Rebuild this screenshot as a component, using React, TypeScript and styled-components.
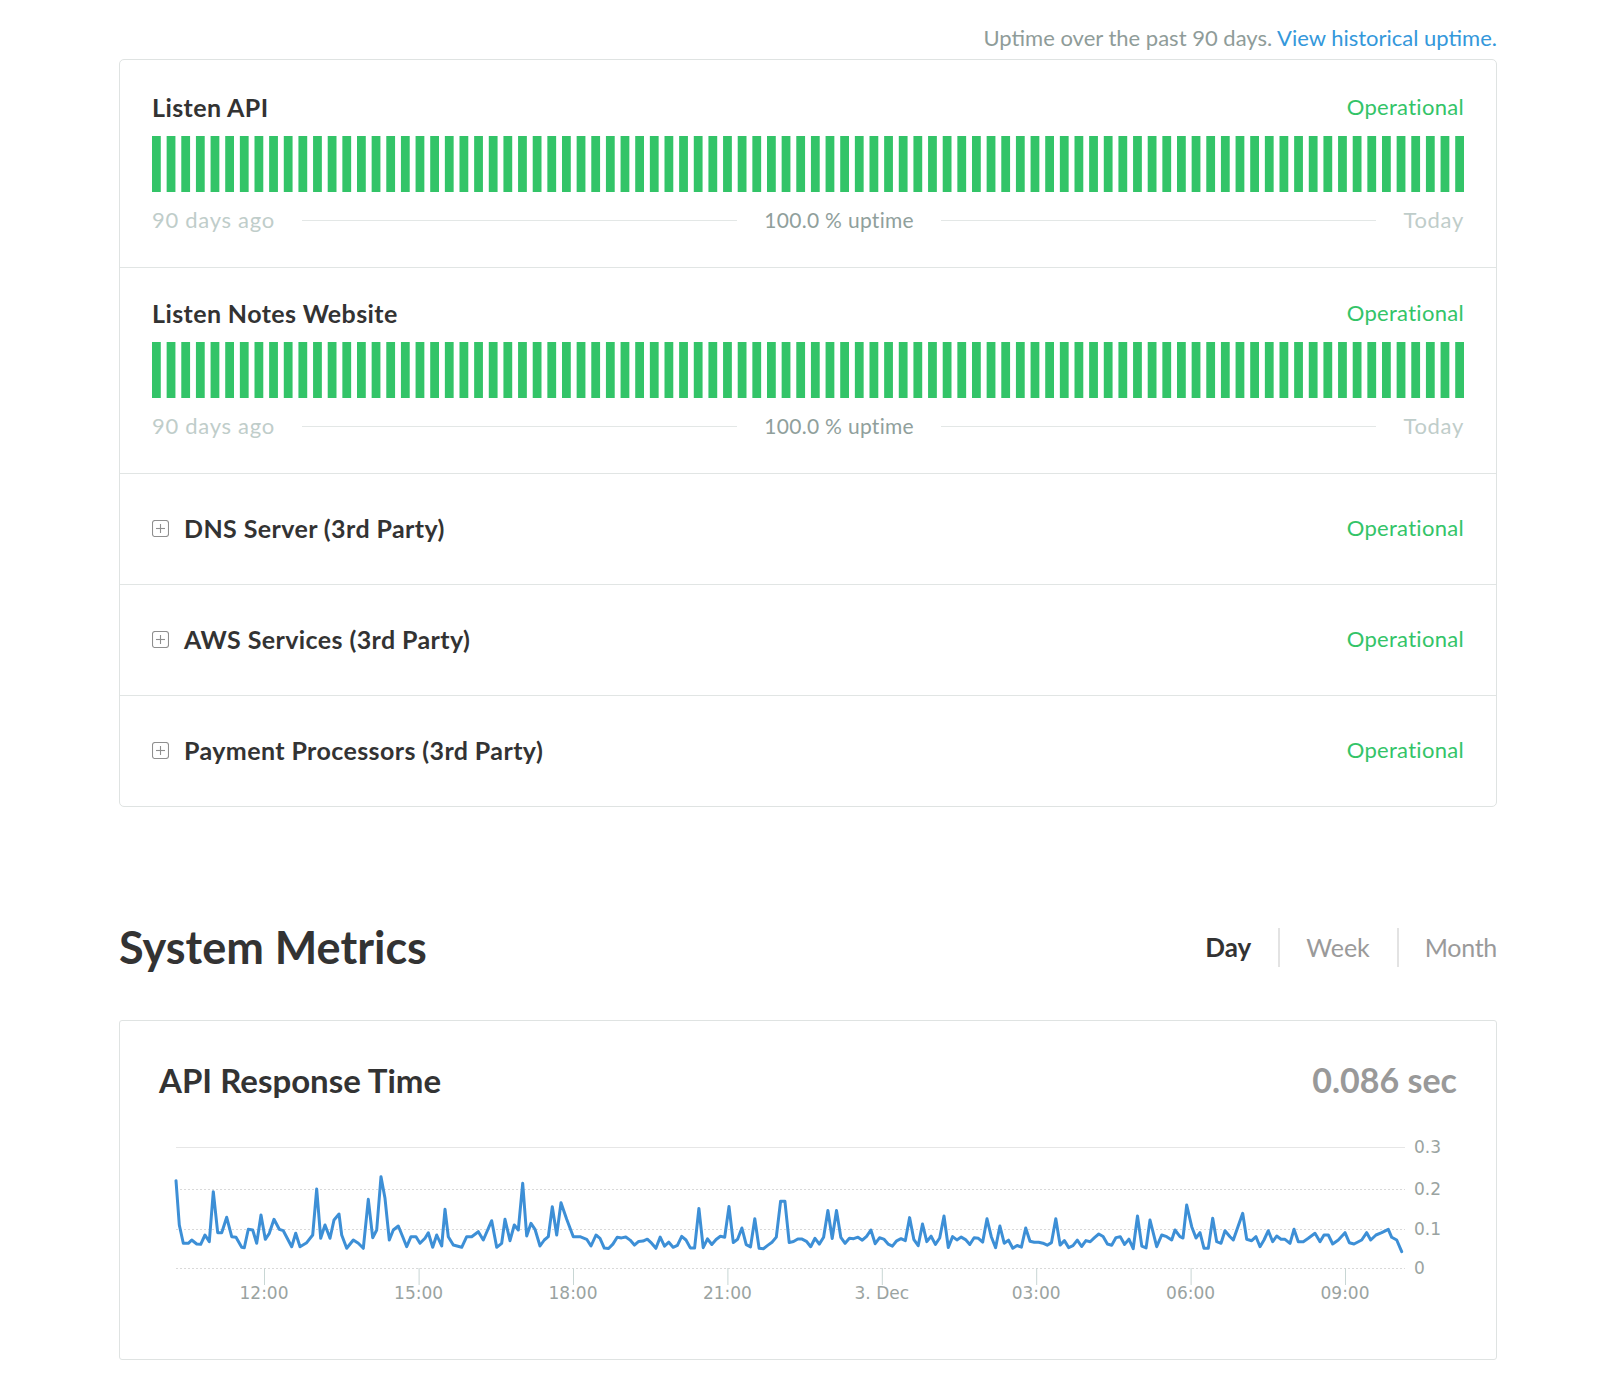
import React from "react";
import styled, { createGlobalStyle } from "styled-components";

const GlobalStyle = createGlobalStyle`
  html, body { margin: 0; padding: 0; background: #fff; }
  body {
    font-family: Lato, "Liberation Sans", sans-serif;
    color: #333;
    -webkit-font-smoothing: antialiased;
  }
`;

const GREEN = "#33c468";

const Page = styled.div`
  width: 1378px;
  margin-left: 119px;
  padding-top: 24px;
  padding-bottom: 18px;
`;

const UptimeNote = styled.div`
  text-align: right;
  font-size: 22px;
  line-height: 28px;
  color: #8f9c99;
  margin-bottom: 7px;
`;

const NoteLink = styled.a`
  color: #3498db;
  text-decoration: none;
`;

const ComponentsCard = styled.div`
  border: 1px solid #dfe3e2;
  border-radius: 5px;
`;

const UptimeRow = styled.div`
  padding: 27px 32px 35px;
  &:first-child {
    padding-top: 29px;
  }
  &:not(:first-child) {
    border-top: 1px solid #e1e5e4;
  }
`;

const GroupRow = styled.div`
  display: flex;
  align-items: center;
  justify-content: space-between;
  height: 36px;
  padding: 36px 32px 38px;
  border-top: 1px solid #e1e5e4;
`;

const RowHeader = styled.div`
  display: flex;
  align-items: center;
  justify-content: space-between;
  height: 36px;
`;

const ComponentName = styled.span`
  font-size: 25px;
  line-height: 36px;
  letter-spacing: 0.4px;
  font-weight: 700;
  color: #333;
`;

const GroupName = styled.span`
  display: flex;
  align-items: center;
  gap: 15px;
  font-size: 25px;
  line-height: 36px;
  letter-spacing: 0.4px;
  font-weight: 700;
  color: #333;
`;

const Status = styled.span`
  font-size: 22px;
  line-height: 36px;
  letter-spacing: 0.3px;
  color: ${GREEN};
`;

const BarSvg = styled.svg`
  display: block;
  width: 100%;
  height: 56px;
  margin-top: 11px;
`;

const Legend = styled.div`
  display: flex;
  align-items: center;
  height: 24px;
  margin-top: 16px;
  line-height: 24px;
`;

const LegendEdge = styled.span`
  font-size: 22px;
  letter-spacing: 0.7px;
  color: #bfcdca;
`;

const LegendCenter = styled.span`
  font-size: 21px;
  letter-spacing: 0.3px;
  color: #90a09c;
`;

const LegendLine = styled.span`
  flex: 1;
  height: 0;
  border-top: 1px solid #e3e7e6;
  margin: 0 27px;
`;

const MetricsHeader = styled.div`
  display: flex;
  align-items: center;
  justify-content: space-between;
  margin-top: 113px;
`;

const MetricsTitle = styled.h2`
  margin: 0;
  font-size: 45px;
  line-height: 54px;
  font-weight: 700;
  color: #333;
`;

const Tabs = styled.div`
  display: flex;
  align-items: center;
`;

const Tab = styled.span<{ $active?: boolean }>`
  font-size: ${(p) => (p.$active ? "26px" : "25px")};
  line-height: 39px;
  padding: 0 27px;
  color: ${(p) => (p.$active ? "#333" : "#9a9a9a")};
  font-weight: ${(p) => (p.$active ? 700 : 400)};
  &:not(:first-child) {
    border-left: 2px solid #e3e3e3;
    padding-left: 26px;
  }
  &:last-child {
    padding-right: 0;
    letter-spacing: -0.3px;
  }
`;

const MetricCard = styled.div`
  margin-top: 46px;
  border: 1px solid #dfe3e2;
  border-radius: 3px;
  padding: 39px 39px 39px;
`;

const MetricHead = styled.div`
  display: flex;
  align-items: baseline;
  justify-content: space-between;
  height: 40px;
`;

const MetricName = styled.span`
  font-size: 33px;
  line-height: 40px;
  font-weight: 700;
  color: #333;
`;

const MetricValue = styled.span`
  font-size: 34px;
  line-height: 40px;
  font-weight: 700;
  color: #999;
`;

const ChartSvg = styled.svg`
  display: block;
  margin-top: 30px;
`;

const PlusIcon = () => (
  <svg width="17" height="17" viewBox="0 0 17 17">
    <rect x="0.5" y="0.5" width="16" height="16" rx="2.5" fill="none" stroke="#8f8f8f" strokeWidth="1.1" />
    <line x1="4" y1="8.5" x2="13" y2="8.5" stroke="#8f8f8f" strokeWidth="1.1" />
    <line x1="8.5" y1="4" x2="8.5" y2="13" stroke="#8f8f8f" strokeWidth="1.1" />
  </svg>
);

const UptimeBars = () => (
  <BarSvg viewBox="0 0 448 34" preserveAspectRatio="none">
    {Array.from({ length: 90 }, (_, i) => (
      <rect key={i} x={i * 5} y={0} width={3} height={34} fill={GREEN} />
    ))}
  </BarSvg>
);

const UptimeComponent = ({ name }: { name: string }) => (
  <UptimeRow>
    <RowHeader>
      <ComponentName>{name}</ComponentName>
      <Status>Operational</Status>
    </RowHeader>
    <UptimeBars />
    <Legend>
      <LegendEdge>90 days ago</LegendEdge>
      <LegendLine />
      <LegendCenter>100.0 % uptime</LegendCenter>
      <LegendLine />
      <LegendEdge>Today</LegendEdge>
    </Legend>
  </UptimeRow>
);

const GroupComponent = ({ name }: { name: string }) => (
  <GroupRow>
    <GroupName>
      <PlusIcon />
      {name}
    </GroupName>
    <Status>Operational</Status>
  </GroupRow>
);

/* ---- chart data (page coordinates) ---- */
const Y0 = 1268;
const PX_PER_UNIT = 400;

const tracedStart: [number, number][] = [
  [176, 1180.7], [179.3, 1225], [183.3, 1243.3], [188.3, 1243.3], [191.7, 1240], [196.7, 1244], [200.7, 1244.3],
  [205, 1235], [209.3, 1241.7], [213.3, 1191.7], [217.7, 1232.7], [221.7, 1232.7], [226.7, 1217.3], [231.7, 1236.7],
  [236, 1237.3], [241.7, 1247.3], [244.3, 1247.7], [248.3, 1229.3], [252.7, 1230], [256.7, 1243.3], [261, 1215],
  [265.3, 1239.3], [269.3, 1233.3], [274, 1219.3], [279.3, 1229.3], [283.3, 1230.7], [291.7, 1246.7], [295.7, 1233.3],
  [300, 1246.7], [306.7, 1242.7], [312.7, 1235], [316.7, 1189], [320.7, 1238.3], [325, 1225], [330, 1238.3],
  [334, 1220], [339, 1214], [341.7, 1235], [346.7, 1248.3], [353.3, 1240], [358.3, 1243.3], [363.3, 1248.3],
  [368.3, 1199.3], [372.7, 1237.7], [376.7, 1230], [381, 1176.7], [385, 1198.3], [389.3, 1240], [393.3, 1230],
  [398.3, 1226], [402.7, 1236.7], [406.7, 1246.7], [411, 1236.7], [416, 1236.7], [420, 1243.3], [425, 1238.3],
  [428.3, 1232.7], [432.7, 1247.3], [436.7, 1235], [441.7, 1246], [445, 1209.3], [448.3, 1236.7], [453.3, 1245],
  [461.7, 1247.3], [466.7, 1236.7], [471.7, 1236.7], [478.3, 1231.7], [483.3, 1240], [491.7, 1220.7],
  [496.7, 1247.3], [501.7, 1243.3], [505, 1219.3], [510, 1240.7], [514.3, 1225], [518.3, 1230], [522.7, 1183.3],
  [526.7, 1236], [531, 1223.3], [535, 1229.3], [540, 1246], [544.3, 1240], [548.3, 1236.7], [552.3, 1206.7],
  [556.7, 1235], [561, 1202.7], [566.7, 1219.3], [573.3, 1236.7], [580, 1236.7], [586.7, 1239.3], [591, 1246],
  [596, 1235], [600, 1238.3],
];

const spikes: [number, number][] = [
  [697, 0.149], [730.6, 0.154], [743, 0.1], [756, 0.123], [782.7, 0.167], [826.5, 0.144], [834.7, 0.144],
  [870, 0.095], [908, 0.126], [923, 0.11], [943, 0.13], [985.7, 0.123], [1000, 0.105], [1025, 0.1],
  [1057, 0.123], [1100, 0.085], [1137.8, 0.13],
];

const generateMiddle = (): [number, number][] => {
  let seed = 20231202;
  const rnd = () => {
    seed = (seed * 1103515245 + 12345) % 2147483648;
    return seed / 2147483648;
  };
  const pts: [number, number][] = [];
  for (let x = 604.3; x < 1148; x += 4.3) {
    let v = 0.064 + (rnd() - 0.5) * 0.032;
    for (const [sx, sv] of spikes) {
      if (Math.abs(sx - x) < 2.2) v = sv;
    }
    pts.push([x, Y0 - v * PX_PER_UNIT]);
  }
  return pts;
};

const tracedEnd: [number, number][] = [
  [1150, 1220], [1156.7, 1246.7], [1161.7, 1235], [1166.7, 1236.7], [1171.7, 1240], [1175, 1230], [1180, 1236.7],
  [1183, 1238], [1186.7, 1205], [1191.7, 1226.7], [1196, 1238], [1200, 1232.7], [1204, 1248.3], [1208.3, 1248.3],
  [1212.7, 1218.3], [1216.7, 1241.7], [1221, 1243.3], [1225, 1230.7], [1230, 1236.7], [1233.3, 1240],
  [1242.7, 1213.3], [1246.7, 1239.3], [1251.7, 1240.7], [1256, 1236.7], [1260, 1246.7], [1264, 1240],
  [1268.3, 1230.7], [1272.7, 1241.7], [1276.7, 1236], [1281, 1239.3], [1285, 1239.3], [1290, 1243.3],
  [1294, 1229.3], [1298.3, 1241.7], [1303.3, 1241.7], [1308.3, 1238.3], [1315, 1233.3], [1320, 1241.7],
  [1324, 1235], [1328.3, 1235], [1332.7, 1244], [1338.3, 1240], [1345, 1232.7], [1349.3, 1242.7], [1354, 1244],
  [1361.7, 1240], [1366.7, 1232.7], [1370.7, 1240], [1376, 1235], [1381.7, 1232.7], [1388.3, 1229.3],
  [1391.7, 1237.3], [1396.7, 1240], [1401.7, 1251.7],
];

const series: [number, number][] = [...tracedStart, ...generateMiddle(), ...tracedEnd];

const CHART_X = 159;
const CHART_Y = 1130;
const CHART_W = 1298;
const CHART_H = 190;
const PLOT_L = 176;
const PLOT_R = 1405;
const AXIS_FONT = '"DejaVu Sans", Verdana, sans-serif';

const yGrid: [string, number][] = [
  ["0", 1268],
  ["0.1", 1229],
  ["0.2", 1189],
  ["0.3", 1147],
];
const xTicks: [number, string][] = [
  [264, "12:00"], [418.6, "15:00"], [573, "18:00"], [727.4, "21:00"], [881.8, "3. Dec"],
  [1036.2, "03:00"], [1190.6, "06:00"], [1345, "09:00"],
];

const ResponseChart = () => {
  const path = series.map(([x, y], i) => `${i === 0 ? "M" : "L"}${x.toFixed(1)},${y.toFixed(1)}`).join(" ");
  return (
    <ChartSvg width={CHART_W} height={CHART_H} viewBox={`${CHART_X} ${CHART_Y} ${CHART_W} ${CHART_H}`}>
      {yGrid.map(([label, y]) => (
        <g key={label}>
          <line
            x1={PLOT_L}
            x2={PLOT_R}
            y1={y + 0.5}
            y2={y + 0.5}
            stroke={label === "0.3" ? "#e6e6e6" : "#d9d9d9"}
            strokeWidth={1}
            strokeDasharray={label === "0.3" ? undefined : "2,2"}
          />
          <text x={1414} y={y + 6} fontFamily={AXIS_FONT} fontSize={17} fill="#9aa3a1">
            {label}
          </text>
        </g>
      ))}
      {xTicks.map(([x, label]) => (
        <g key={label}>
          <line x1={x + 0.5} x2={x + 0.5} y1={1268} y2={1285} stroke="#c8d6d4" strokeWidth={1} />
          <text x={x} y={1299} textAnchor="middle" fontFamily={AXIS_FONT} fontSize={17} fill="#9aa3a1">
            {label}
          </text>
        </g>
      ))}
      <path d={path} fill="none" stroke="#3d8fd6" strokeWidth={3} strokeLinejoin="round" strokeLinecap="round" />
    </ChartSvg>
  );
};

export default function App() {
  return (
    <>
      <GlobalStyle />
      <Page>
        <UptimeNote>
          Uptime over the past 90 days. <NoteLink href="#">View historical uptime.</NoteLink>
        </UptimeNote>
        <ComponentsCard>
          <UptimeComponent name="Listen API" />
          <UptimeComponent name="Listen Notes Website" />
          <GroupComponent name="DNS Server (3rd Party)" />
          <GroupComponent name="AWS Services (3rd Party)" />
          <GroupComponent name="Payment Processors (3rd Party)" />
        </ComponentsCard>
        <MetricsHeader>
          <MetricsTitle>System Metrics</MetricsTitle>
          <Tabs>
            <Tab $active>Day</Tab>
            <Tab>Week</Tab>
            <Tab>Month</Tab>
          </Tabs>
        </MetricsHeader>
        <MetricCard>
          <MetricHead>
            <MetricName>API Response Time</MetricName>
            <MetricValue>0.086 sec</MetricValue>
          </MetricHead>
          <ResponseChart />
        </MetricCard>
      </Page>
    </>
  );
}
